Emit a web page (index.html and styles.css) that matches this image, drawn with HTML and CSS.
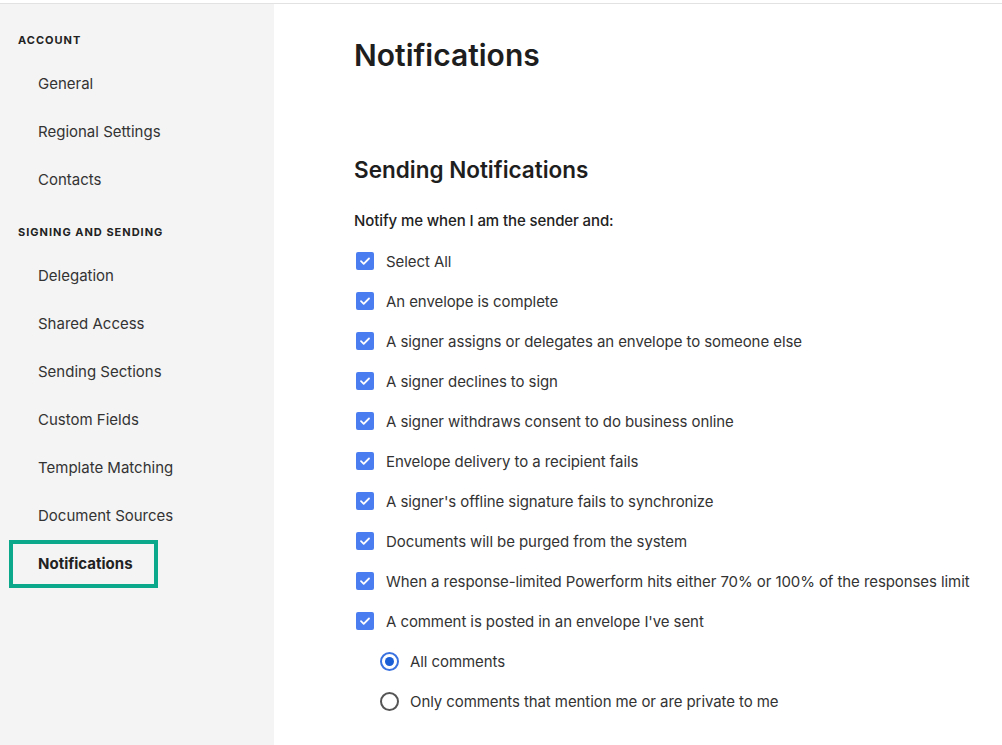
FILE: index.html
```html
<!DOCTYPE html>
<html>
<head>
<meta charset="utf-8">
<link rel="stylesheet" href="styles.css">
</head>
<body>
<div class="topbar"></div>
<div class="layout">
  <nav class="sidebar">
    <div class="nav-head">ACCOUNT</div>
    <a class="nav-item">General</a>
    <a class="nav-item">Regional Settings</a>
    <a class="nav-item">Contacts</a>
    <div class="nav-head second">SIGNING AND SENDING</div>
    <a class="nav-item">Delegation</a>
    <a class="nav-item">Shared Access</a>
    <a class="nav-item">Sending Sections</a>
    <a class="nav-item">Custom Fields</a>
    <a class="nav-item">Template Matching</a>
    <a class="nav-item">Document Sources</a>
    <a class="nav-item active">Notifications</a>
  </nav>
  <main class="main">
    <h1 class="title">Notifications</h1>
    <h2 class="subtitle">Sending Notifications</h2>
    <p class="lead">Notify me when I am the sender and:</p>
    <ul class="options">
      <li class="opt"><span class="cb"><svg viewBox="0 0 18 18"><path d="M5 9.2l2.7 2.6L13 6.5"/></svg></span>Select All</li>
      <li class="opt"><span class="cb"><svg viewBox="0 0 18 18"><path d="M5 9.2l2.7 2.6L13 6.5"/></svg></span>An envelope is complete</li>
      <li class="opt"><span class="cb"><svg viewBox="0 0 18 18"><path d="M5 9.2l2.7 2.6L13 6.5"/></svg></span>A signer assigns or delegates an envelope to someone else</li>
      <li class="opt"><span class="cb"><svg viewBox="0 0 18 18"><path d="M5 9.2l2.7 2.6L13 6.5"/></svg></span>A signer declines to sign</li>
      <li class="opt"><span class="cb"><svg viewBox="0 0 18 18"><path d="M5 9.2l2.7 2.6L13 6.5"/></svg></span>A signer withdraws consent to do business online</li>
      <li class="opt"><span class="cb"><svg viewBox="0 0 18 18"><path d="M5 9.2l2.7 2.6L13 6.5"/></svg></span>Envelope delivery to a recipient fails</li>
      <li class="opt"><span class="cb"><svg viewBox="0 0 18 18"><path d="M5 9.2l2.7 2.6L13 6.5"/></svg></span>A signer's offline signature fails to synchronize</li>
      <li class="opt"><span class="cb"><svg viewBox="0 0 18 18"><path d="M5 9.2l2.7 2.6L13 6.5"/></svg></span>Documents will be purged from the system</li>
      <li class="opt"><span class="cb"><svg viewBox="0 0 18 18"><path d="M5 9.2l2.7 2.6L13 6.5"/></svg></span>When a response-limited Powerform hits either 70% or 100% of the responses limit</li>
      <li class="opt"><span class="cb"><svg viewBox="0 0 18 18"><path d="M5 9.2l2.7 2.6L13 6.5"/></svg></span>A comment is posted in an envelope I've sent</li>
      <li class="opt sub"><span class="radio checked"></span>All comments</li>
      <li class="opt sub"><span class="radio"></span>Only comments that mention me or are private to me</li>
    </ul>
  </main>
</div>
</body>
</html>
```
FILE: styles.css
```css
* { box-sizing: border-box; }
html, body { margin: 0; padding: 0; height: 100%; }
body {
  font-family: "Inter", "Liberation Sans", sans-serif;
  color: #333;
  background: #fff;
  display: flex;
  flex-direction: column;
}
.topbar {
  height: 4px;
  border-bottom: 1px solid #e2e2e2;
  flex: none;
}
.layout {
  flex: 1;
  display: flex;
}
.sidebar {
  width: 274px;
  flex: none;
  background: #f4f4f4;
  padding-top: 26px;
  display: flex;
  flex-direction: column;
}
.nav-head {
  height: 20px;
  line-height: 20px;
  padding-left: 18px;
  font-size: 11px;
  font-weight: 700;
  letter-spacing: 1px;
  color: #222;
  margin-bottom: 10px;
}
.nav-head.second { margin-top: 18px; }
.nav-item {
  display: block;
  height: 48px;
  line-height: 48px;
  padding-left: 38px;
  font-size: 15px;
  color: #333;
}
.nav-item.active {
  margin-left: 9px;
  width: 149px;
  border: 4px solid #0ba88c;
  line-height: 40px;
  padding-left: 25px;
  font-weight: 700;
  color: #222;
}
.main {
  flex: 1;
  padding: 31px 0 0 80px;
}
.title {
  margin: 0;
  font-size: 30px;
  line-height: 40px;
  font-weight: 600;
  color: #1e1e1e;
}
.subtitle {
  margin: 80px 0 0;
  font-size: 22.5px;
  line-height: 30px;
  font-weight: 600;
  color: #1e1e1e;
}
.lead {
  margin: 24px 0 0;
  font-size: 15px;
  line-height: 24px;
  font-weight: 500;
  letter-spacing: -0.1px;
  color: #222;
}
.options {
  list-style: none;
  margin: 8px 0 0;
  padding: 0;
}
.opt {
  height: 40px;
  display: flex;
  align-items: center;
  font-size: 15px;
  letter-spacing: -0.08px;
  color: #333;
}
.cb {
  width: 18px;
  height: 18px;
  border-radius: 2px;
  background: #4a7ef0;
  margin-left: 2px;
  margin-right: 12px;
  display: flex;
}
.cb svg { width: 18px; height: 18px; }
.cb path { fill: none; stroke: #fff; stroke-width: 1.8; stroke-linecap: round; stroke-linejoin: round; }
.opt.sub { padding-left: 26px; }
.radio {
  width: 19px;
  height: 19px;
  border-radius: 50%;
  border: 2px solid #555;
  margin-right: 11px;
  display: flex;
  align-items: center;
  justify-content: center;
}
.radio.checked { border-color: #3a72e0; }
.radio.checked::after {
  content: "";
  width: 9px;
  height: 9px;
  border-radius: 50%;
  background: #1a5fd6;
}
```
